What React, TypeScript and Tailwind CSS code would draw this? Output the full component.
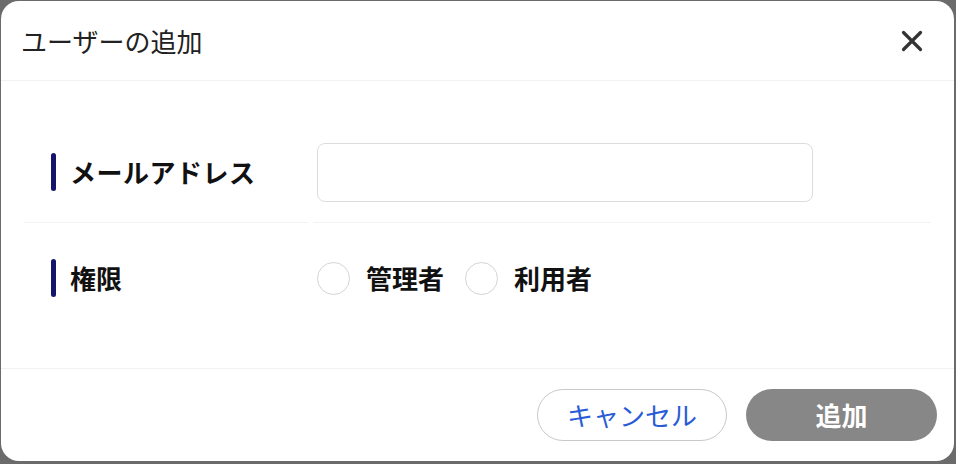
const font = { fontFamily: '"Noto Sans CJK JP", "Noto Sans", sans-serif' };

const Label = ({ children }: { children: string }) => (
  <div className="flex items-center w-[284px] pl-[27px] border-b border-[#f2f2f2] h-full">
    <span className="w-[5px] h-[38px] rounded-full bg-[#15156b] mr-[14px]" />
    <span className="text-[26px] font-bold text-[#111] leading-none tracking-[0.02em]">{children}</span>
  </div>
);

const Radio = ({ label }: { label: string }) => (
  <label className="flex items-center">
    <span className="w-[33px] h-[33px] rounded-full border border-[#d4d4d4] bg-white" />
    <span className="ml-[16px] text-[26px] font-bold text-[#111] leading-none">{label}</span>
  </label>
);

export default function App() {
  return (
    <div className="w-[956px] h-[464px] bg-[#6b6b6b] pt-px pl-px" style={font}>
      <div className="w-[953px] h-[460px] rounded-[18px] bg-white flex flex-col overflow-hidden">
        {/* header */}
        <div className="h-[80px] flex items-center justify-between pl-[20px] pr-[31px] border-b border-[#f2f2f2]">
          <h2 className="text-[26px] text-[#222] leading-none">ユーザーの追加</h2>
          <svg width="22" height="22" viewBox="0 0 22 22" className="text-[#333]">
            <path d="M2.5 2.5 L19.5 19.5 M19.5 2.5 L2.5 19.5" stroke="currentColor" strokeWidth="3.2" strokeLinecap="round" />
          </svg>
        </div>

        {/* body */}
        <div className="flex-1 px-[23px] pt-[41px]">
          <div className="flex gap-[5px] h-[101px]">
            <Label>メールアドレス</Label>
            <div className="flex-1 flex items-center pl-[4px] border-b border-[#f2f2f2]">
              <input
                type="text"
                className="w-[496px] h-[59px] rounded-[8px] border border-[#dcdcdc] outline-none px-3 text-[20px]"
              />
            </div>
          </div>
          <div className="flex gap-[5px] h-[110px]">
            <div className="flex items-center w-[284px] pl-[27px] h-full">
              <span className="w-[5px] h-[38px] rounded-full bg-[#15156b] mr-[14px]" />
              <span className="text-[26px] font-bold text-[#111] leading-none">権限</span>
            </div>
            <div className="flex-1 flex items-center pl-[4px] gap-[21px]">
              <Radio label="管理者" />
              <Radio label="利用者" />
            </div>
          </div>
        </div>

        {/* footer */}
        <div className="h-[93px] border-t border-[#f2f2f2] flex items-start justify-end pt-[20px] pr-[17px] gap-[19px]">
          <button className="w-[190px] h-[52px] rounded-full border border-[#c9c9c9] bg-white text-[#2a5bd7] text-[26px] leading-none">
            キャンセル
          </button>
          <button className="w-[191px] h-[52px] rounded-full bg-[#878787] text-white text-[26px] font-bold leading-none">
            追加
          </button>
        </div>
      </div>
    </div>
  );
}
